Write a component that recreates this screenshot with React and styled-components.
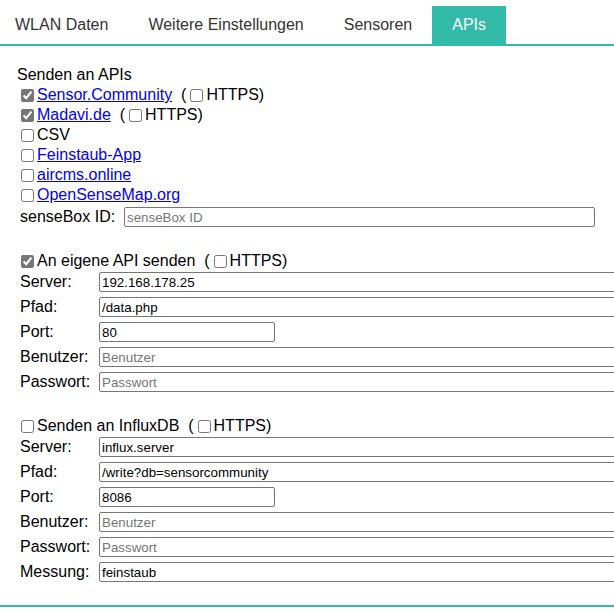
import React from 'react'
import styled, { createGlobalStyle } from 'styled-components'

const teal = '#33bbaa'

const GlobalStyle = createGlobalStyle`
    html, body {
        margin: 0;
        overflow: hidden;
        background: #fff;
    }
    body {
        font-family: "Liberation Sans", Arial, sans-serif;
        font-size: 16px;
        color: #000;
    }
`

const Page = styled.div`
    padding-top: 6px;
    width: 614px;
`

const TabBar = styled.div`
    display: flex;
    margin-left: -5px;
`

const Tab = styled.div`
    padding: 10px 20px;
    line-height: 18px;
    color: ${p => (p.active ? '#fff' : '#333')};
    background: ${p => (p.active ? teal : 'transparent')};
    white-space: nowrap;
`

const Panel = styled.div`
    border-top: 2px solid ${teal};
    border-bottom: 2px solid ${teal};
    padding: 19px 0 23px 17px;
`

const Line = styled.div`
    display: flex;
    align-items: center;
    height: 20px;
    line-height: 20px;
    white-space: pre;
    margin-top: ${p => p.mt || 0}px;
`

const Check = styled.input.attrs({ type: 'checkbox' })`
    width: 13px;
    height: 13px;
    margin: 3px 3px 3px 4px;
    accent-color: #767676;
    flex: none;
`

const Link = styled.a`
    color: #0000ee;
    text-decoration: underline;
`

const FieldTable = styled.div`
    display: grid;
    grid-template-columns: ${p => p.labelCol} auto;
    justify-content: start;
    column-gap: 4px;
    row-gap: 5px;
    padding-left: 3px;
    margin-top: ${p => p.mt || 0}px;
`

const Label = styled.div`
    height: 20px;
    line-height: 19px;
    white-space: nowrap;
`

const Field = styled.input`
    box-sizing: border-box;
    height: 20px;
    width: ${p => p.w}px;
    border: 1px solid #767676;
    border-radius: 2px;
    padding: 0 2px;
    font-family: "Liberation Sans", Arial, sans-serif;
    font-size: 13.33px;
    color: #000;
    background: #fff;
    outline: none;

    &::placeholder {
        color: #757575;
    }
`

const apis = [
    { name: 'Sensor.Community', link: true, checked: true, https: true },
    { name: 'Madavi.de', link: true, checked: true, https: true },
    { name: 'CSV', link: false, checked: false },
    { name: 'Feinstaub-App', link: true, checked: false },
    { name: 'aircms.online', link: true, checked: false },
    { name: 'OpenSenseMap.org', link: true, checked: false },
]

const WIDE = 560

function Https() {
    return (
        <>
            {'\u00a0\u00a0('}
            <Check />
            {'HTTPS)'}
        </>
    )
}

function ServerFields({ mt, fields }) {
    return (
        <FieldTable labelCol="75px" mt={mt}>
            {fields.map(f => (
                <React.Fragment key={f.label}>
                    <Label>{f.label}</Label>
                    <Field
                        w={f.w || WIDE}
                        defaultValue={f.value}
                        placeholder={f.placeholder}
                    />
                </React.Fragment>
            ))}
        </FieldTable>
    )
}

export default function App() {
    return (
        <Page>
            <GlobalStyle />
            <TabBar>
                <Tab>WLAN Daten</Tab>
                <Tab>Weitere Einstellungen</Tab>
                <Tab>Sensoren</Tab>
                <Tab active>APIs</Tab>
            </TabBar>

            <Panel>
                <Line>Senden an APIs</Line>
                {apis.map(a => (
                    <Line key={a.name}>
                        <Check defaultChecked={a.checked} />
                        {a.link ? <Link href="#">{a.name}</Link> : a.name}
                        {a.https && <Https />}
                    </Line>
                ))}

                <FieldTable labelCol="100px" mt={2}>
                    <Label>senseBox ID:</Label>
                    <Field w={471} placeholder="senseBox ID" />
                </FieldTable>

                <Line mt={24}>
                    <Check defaultChecked />
                    {'An eigene API senden'}
                    <Https />
                </Line>
                <ServerFields
                    mt={1}
                    fields={[
                        { label: 'Server:', value: '192.168.178.25' },
                        { label: 'Pfad:', value: '/data.php' },
                        { label: 'Port:', value: '80', w: 176 },
                        { label: 'Benutzer:', placeholder: 'Benutzer' },
                        { label: 'Passwort:', placeholder: 'Passwort' },
                    ]}
                />

                <Line mt={24}>
                    <Check />
                    {'Senden an InfluxDB'}
                    <Https />
                </Line>
                <ServerFields
                    mt={1}
                    fields={[
                        { label: 'Server:', value: 'influx.server' },
                        { label: 'Pfad:', value: '/write?db=sensorcommunity' },
                        { label: 'Port:', value: '8086', w: 176 },
                        { label: 'Benutzer:', placeholder: 'Benutzer' },
                        { label: 'Passwort:', placeholder: 'Passwort' },
                        { label: 'Messung:', value: 'feinstaub' },
                    ]}
                />
            </Panel>
        </Page>
    )
}
